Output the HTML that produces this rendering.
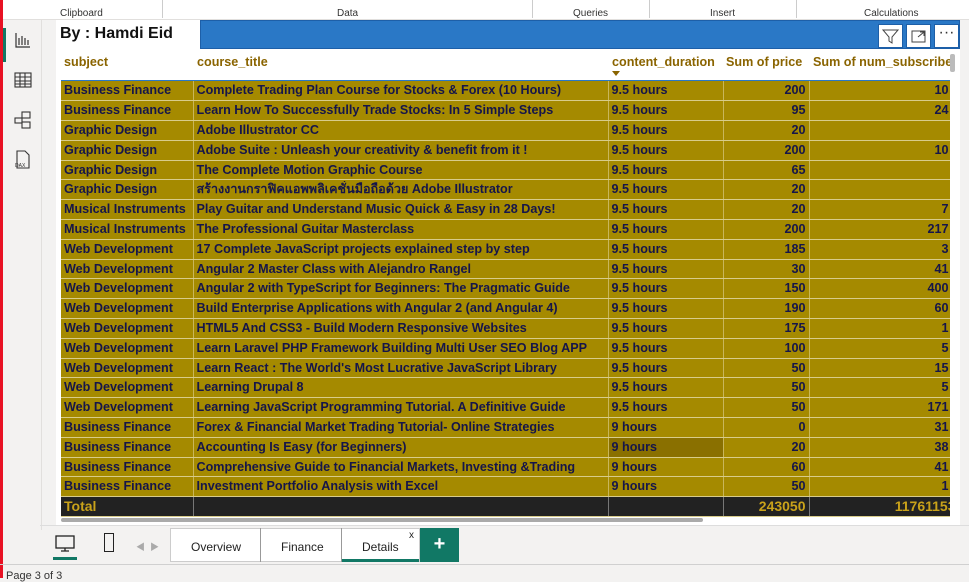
<!DOCTYPE html>
<html><head><meta charset="utf-8"><style>
*{margin:0;padding:0;box-sizing:border-box}
body{width:969px;height:578px;overflow:hidden;background:#f3f2f1;font-family:"Liberation Sans","Noto Sans CJK SC",sans-serif;position:relative}
.abs{position:absolute}
.rib{left:0;top:0;width:969px;height:20px;background:#fff;border-bottom:1px solid #e1dfdd;font-size:10px;color:#333}
.rib span{position:absolute;top:8px}
.rib i{position:absolute;top:0;height:18px;width:1px;background:#ccc}
.red{left:0;top:0;width:3px;height:578px;background:#e81123}
.nav{left:3px;top:20px;width:39px;height:510px;background:#f3f2f1;border-right:1px solid #e1dfdd}
table{border-collapse:collapse;font-weight:bold;font-size:12.6px;color:#15154a}
td{height:19.8px;line-height:17px;padding:0 3px;white-space:nowrap;overflow:hidden;border-right:1px solid #c9b65a;border-bottom:1px solid #d8cc8a;background:#a58a00}
td div{height:18px;overflow:hidden}
td.n{text-align:right}
td.s{text-align:right;padding-right:10px}
tr.t td{background:#222;color:#c9a21a;font-size:14px;height:20px;border-right:1px solid #777}
tr.t td.s{padding-right:3px}
.hd{font-size:12.6px;color:#8a6400;font-weight:bold;top:55px}
</style></head><body>
<div class="abs rib"><span style="left:60px">Clipboard</span><i style="left:162px"></i><span style="left:337px">Data</span><i style="left:532px"></i><span style="left:573px">Queries</span><i style="left:649px"></i><span style="left:710px">Insert</span><i style="left:796px"></i><span style="left:864px">Calculations</span></div>
<div class="abs red"></div>
<div class="abs nav">
<div class="abs" style="left:0;top:8px;width:3px;height:34px;background:#117865"></div>
<svg class="abs" style="left:12px;top:12px" width="16" height="16" fill="none" stroke="#333" stroke-width="1.2"><path d="M1 1v14h14M4 13V6M7 13V4M10 13V6M13 13V8"/></svg>
<svg class="abs" style="left:11px;top:52px" width="18" height="16" fill="none" stroke="#333" stroke-width="1.1"><rect x="1" y="1" width="16" height="14"/><path d="M1 5h16M1 9h16M1 12h16M6 1v14M11 1v14"/></svg>
<svg class="abs" style="left:11px;top:91px" width="18" height="18" fill="none" stroke="#333" stroke-width="1.1"><rect x="8" y="1" width="8" height="6"/><rect x="1" y="7" width="7" height="5"/><rect x="8" y="11" width="8" height="6"/></svg>
<svg class="abs" style="left:11px;top:130px" width="18" height="20" fill="none" stroke="#333" stroke-width="1.1"><path d="M3 1h8l4 4v13H3z"/><text x="1" y="17" font-size="5" fill="#333" stroke="none">DAX</text></svg>
</div>
<div class="abs" style="left:56px;top:20px;width:904px;height:506px;background:#fff"></div>
<div class="abs" style="left:200px;top:20px;width:760px;height:29px;background:#2a78c6;border:1px solid #1d5fa8"></div>
<div class="abs" style="left:60px;top:25px;font-size:16px;font-weight:bold;color:#111">By : Hamdi Eid</div>
<div class="abs" style="left:878px;top:24px;width:25px;height:24px;background:#fff;border:1px solid #1d5fa8"><svg width="23" height="22" fill="none" stroke="#444"><path d="M4 5h15l-6 7v6l-3-2v-4z"/></svg></div>
<div class="abs" style="left:906px;top:24px;width:25px;height:24px;background:#fff;border:1px solid #1d5fa8"><svg width="23" height="22" fill="none" stroke="#444"><path d="M5 6h13v11H5zM11 12l6-5M13 7h4v4"/></svg></div>
<div class="abs" style="left:934px;top:24px;width:25px;height:24px;background:#fff;border:1px solid #1d5fa8;font-size:16px;text-align:center;line-height:16px;color:#333">···</div>
<div class="abs hd" style="left:64px">subject</div>
<div class="abs hd" style="left:197px">course_title</div>
<div class="abs hd" style="left:612px">content_duration</div>
<div class="abs" style="left:612px;top:71px;width:0;height:0;border-left:4px solid transparent;border-right:4px solid transparent;border-top:5px solid #8a6400"></div>
<div class="abs hd" style="left:726px">Sum of price</div>
<div class="abs hd" style="left:813px;width:137px;overflow:hidden;white-space:nowrap">Sum of num_subscribers</div>
<div class="abs" style="left:61px;top:80px;width:889px;height:1px;background:#2a78c6"></div>
<div class="abs" style="left:61px;top:81px;width:889px;height:437px;overflow:hidden">
<table style="width:898px;table-layout:fixed">
<colgroup><col style="width:132px"><col style="width:415px"><col style="width:115px"><col style="width:86px"><col style="width:150px"></colgroup>
<tr><td>Business Finance</td><td>Complete Trading Plan Course for Stocks &amp; Forex (10 Hours)</td><td>9.5 hours</td><td class="n">200</td><td class="s">10</td></tr>
<tr><td>Business Finance</td><td>Learn How To Successfully Trade Stocks: In 5 Simple Steps</td><td>9.5 hours</td><td class="n">95</td><td class="s">24</td></tr>
<tr><td>Graphic Design</td><td>Adobe Illustrator CC</td><td>9.5 hours</td><td class="n">20</td><td class="s"></td></tr>
<tr><td>Graphic Design</td><td>Adobe Suite : Unleash your creativity &amp; benefit from it !</td><td>9.5 hours</td><td class="n">200</td><td class="s">10</td></tr>
<tr><td>Graphic Design</td><td>The Complete Motion Graphic Course</td><td>9.5 hours</td><td class="n">65</td><td class="s"></td></tr>
<tr><td>Graphic Design</td><td><div>สร้างงานกราฟิคแอพพลิเคชั่นมือถือด้วย Adobe Illustrator</div></td><td>9.5 hours</td><td class="n">20</td><td class="s"></td></tr>
<tr><td>Musical Instruments</td><td>Play Guitar and Understand Music Quick &amp; Easy in 28 Days!</td><td>9.5 hours</td><td class="n">20</td><td class="s">7</td></tr>
<tr><td>Musical Instruments</td><td>The Professional Guitar Masterclass</td><td>9.5 hours</td><td class="n">200</td><td class="s">217</td></tr>
<tr><td>Web Development</td><td>17 Complete JavaScript projects explained step by step</td><td>9.5 hours</td><td class="n">185</td><td class="s">3</td></tr>
<tr><td>Web Development</td><td>Angular 2 Master Class with Alejandro Rangel</td><td>9.5 hours</td><td class="n">30</td><td class="s">41</td></tr>
<tr><td>Web Development</td><td>Angular 2 with TypeScript for Beginners: The Pragmatic Guide</td><td>9.5 hours</td><td class="n">150</td><td class="s">400</td></tr>
<tr><td>Web Development</td><td>Build Enterprise Applications with Angular 2 (and Angular 4)</td><td>9.5 hours</td><td class="n">190</td><td class="s">60</td></tr>
<tr><td>Web Development</td><td>HTML5 And CSS3 - Build Modern Responsive Websites</td><td>9.5 hours</td><td class="n">175</td><td class="s">1</td></tr>
<tr><td>Web Development</td><td>Learn Laravel PHP Framework Building Multi User SEO Blog APP</td><td>9.5 hours</td><td class="n">100</td><td class="s">5</td></tr>
<tr><td>Web Development</td><td>Learn React : The World's Most Lucrative JavaScript Library</td><td>9.5 hours</td><td class="n">50</td><td class="s">15</td></tr>
<tr><td>Web Development</td><td>Learning Drupal 8</td><td>9.5 hours</td><td class="n">50</td><td class="s">5</td></tr>
<tr><td>Web Development</td><td>Learning JavaScript Programming Tutorial. A Definitive Guide</td><td>9.5 hours</td><td class="n">50</td><td class="s">171</td></tr>
<tr><td>Business Finance</td><td>Forex &amp; Financial Market Trading Tutorial- Online Strategies</td><td>9 hours</td><td class="n">0</td><td class="s">31</td></tr>
<tr><td>Business Finance</td><td>Accounting Is Easy (for Beginners)</td><td style="background:#8a7000">9 hours</td><td class="n">20</td><td class="s">38</td></tr>
<tr><td>Business Finance</td><td>Comprehensive Guide to Financial Markets, Investing &amp;Trading</td><td>9 hours</td><td class="n">60</td><td class="s">41</td></tr>
<tr><td>Business Finance</td><td>Investment Portfolio Analysis with Excel</td><td>9 hours</td><td class="n">50</td><td class="s">1</td></tr>
<tr class="t"><td>Total</td><td></td><td></td><td class="n">243050</td><td class="s">11761153</td></tr>
</table></div>
<div class="abs" style="left:61px;top:518px;width:642px;height:4px;background:#aaa;border-radius:2px"></div>
<div class="abs" style="left:950px;top:54px;width:5px;height:18px;background:#bbb;border-radius:2px"></div>
<div class="abs" style="left:40px;top:525px;width:929px;height:1px;background:#ddd"></div>
<svg class="abs" style="left:54px;top:535px" width="22" height="18" fill="none" stroke="#222" stroke-width="1.3"><rect x="2" y="1" width="18" height="12"/><path d="M11 13v3M7 16h8"/></svg>
<div class="abs" style="left:53px;top:557px;width:24px;height:3px;background:#117865"></div>
<div class="abs" style="left:104px;top:533px;width:10px;height:19px;border:1.3px solid #222"></div>
<div class="abs" style="left:136px;top:540px;font-size:9px;color:#aaa">◀ &nbsp;▶</div>
<div class="abs" style="left:170px;top:528px;width:250px;height:34px;background:#fff;border:1px solid #ccc"></div>
<div class="abs" style="left:260px;top:528px;width:1px;height:34px;background:#999"></div>
<div class="abs" style="left:341px;top:528px;width:1px;height:34px;background:#999"></div>
<div class="abs" style="left:191px;top:540px;font-size:12px;color:#222">Overview</div>
<div class="abs" style="left:281px;top:540px;font-size:12px;color:#222">Finance</div>
<div class="abs" style="left:362px;top:540px;font-size:12px;color:#222">Details</div>
<div class="abs" style="left:409px;top:530px;font-size:10px;color:#222">x</div>
<div class="abs" style="left:342px;top:559px;width:77px;height:3px;background:#117865"></div>
<div class="abs" style="left:420px;top:528px;width:39px;height:34px;background:#117865;color:#fff;font-size:20px;font-weight:bold;text-align:center;line-height:32px">+</div>
<div class="abs" style="left:0;top:564px;width:969px;height:1px;background:#d0d0d0"></div>
<div class="abs" style="left:6px;top:570px;font-size:11px;color:#333">Page 3 of 3</div>
</body></html>
